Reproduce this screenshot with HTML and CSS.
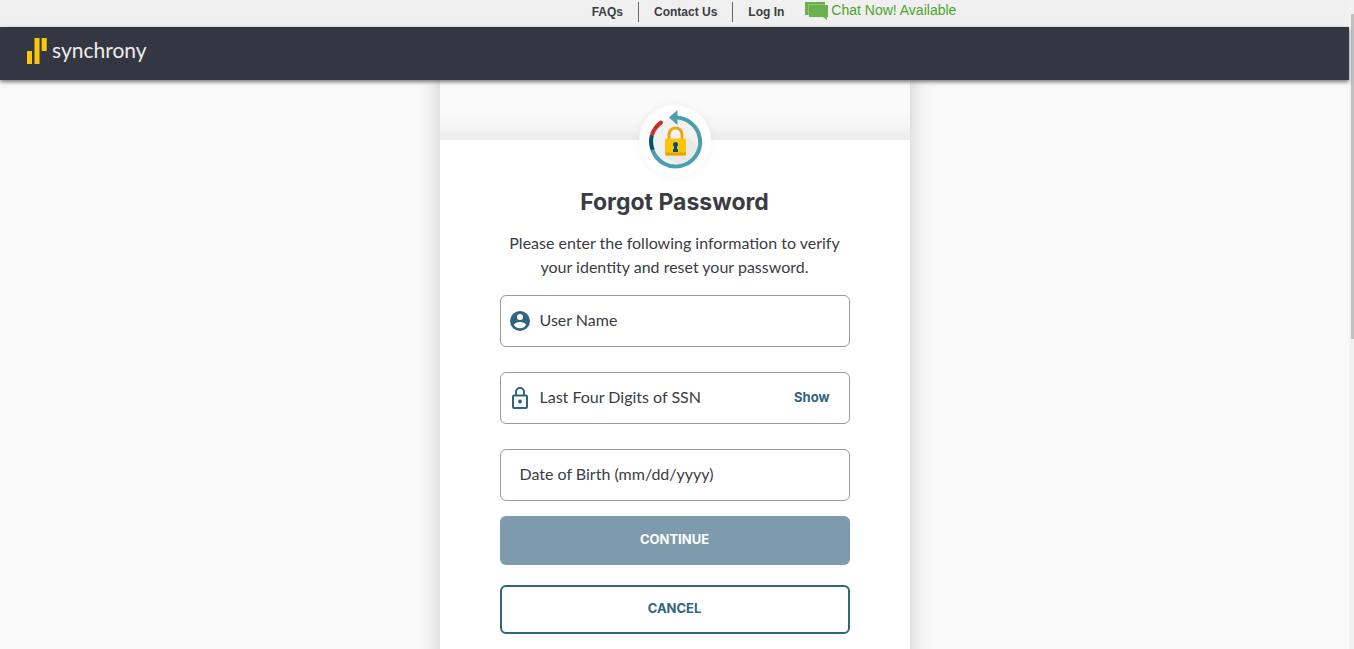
FILE: index.html
```html
<!DOCTYPE html>
<html lang="en">
<head>
<meta charset="utf-8">
<title>Forgot Password</title>
<link rel="stylesheet" href="styles.css">
</head>
<body>
<div class="shell">
  <div class="page">
    <nav class="topbar">
      <ul class="links">
        <li><a href="#faqs">FAQs</a></li>
        <li><a href="#contact">Contact Us</a></li>
        <li><a href="#login">Log In</a></li>
      </ul>
      <a class="chat" href="#chat">
        <svg width="24" height="20" viewBox="0 0 24 20" aria-hidden="true">
          <path fill="#8cc474" d="M0 1h20v13H0z"/>
          <path fill="#6ab04c" d="M0 1h20v2H3v11H0z"/>
          <path fill="#6ab04c" d="M4 4h19v12h-1v3l-4-3H4z"/>
        </svg>
        <span>Chat Now! Available</span>
      </a>
    </nav>
    <header class="brandbar">
      <a class="brand" href="#home">
        <svg width="20" height="26" viewBox="0 0 20 26" aria-hidden="true">
          <path fill="#fbc60d" d="M0 13h5v13H0zM7.500 0h5v26h-5zM14.700 0h5v13h-5z"/>
        </svg>
        <span>synchrony</span>
      </a>
    </header>
    <main class="card">
      <div class="banner"></div>
      <section class="panel">
        <div class="badge">
          <svg width="72" height="72" viewBox="0 0 72 72" aria-hidden="true">
            <circle cx="36.500" cy="37" r="24" fill="#f1f1ef"/>
            <path fill="#e9e9e7" d="M47 31l12 11a24 24 0 0 1-19 18L26 51h20z"/>
            <g fill="none" stroke-width="4">
              <path stroke="#4a9fae" d="M36.500 12.500A24.500 24.500 0 1 1 13.500 45"/>
              <path stroke="#00506e" d="M13.700 45A24.500 24.500 0 0 1 12.900 30"/>
              <path stroke="#c9302c" stroke-linecap="round" d="M13.300 29A24 24 0 0 1 22 17.500"/>
            </g>
            <path fill="#4a9fae" d="M30 12.500L38.500 5v15z"/>
            <path fill="none" stroke="#eda80d" stroke-width="3" d="M30 34v-4.500a6.500 6.500 0 0 1 13 0V34"/>
            <rect x="26" y="33.500" width="21" height="17" rx="1.500" fill="#fcc50b"/>
            <path fill="#e4a30b" d="M26 47.500h21V49a1.500 1.500 0 0 1-1.500 1.500h-18A1.500 1.500 0 0 1 26 49z"/>
            <path fill="#00506e" d="M36.500 37a2.600 2.600 0 0 1 1.500 4.700V44h1v3h-5v-3h1v-2.300a2.600 2.600 0 0 1 1.500-4.700z"/>
          </svg>
        </div>
        <h1>Forgot Password</h1>
        <p class="intro">Please enter the following information to verify your identity and reset your password.</p>
        <form>
          <div class="field">
            <svg width="20" height="20" viewBox="2 2 20 20" aria-hidden="true">
              <path fill="#31657f" d="M12 2a10 10 0 1 0 0 20 10 10 0 0 0 0-20zm0 3a3 3 0 1 1 0 6 3 3 0 0 1 0-6zm0 14.200a7.200 7.200 0 0 1-6-3.220c.03-1.990 4-3.080 6-3.080s5.970 1.090 6 3.080a7.200 7.200 0 0 1-6 3.220z"/>
            </svg>
            <input type="text" aria-label="User Name" placeholder="User Name">
          </div>
          <div class="field">
            <svg width="20" height="24" viewBox="0 0 20 24" aria-hidden="true">
              <rect x="3" y="9.500" width="14" height="12.500" rx="1" fill="none" stroke="#31657f" stroke-width="2"/>
              <path fill="none" stroke="#31657f" stroke-width="2" d="M6 9V6a4 4 0 0 1 8 0v3"/>
              <circle cx="10" cy="15.500" r="2" fill="#31657f"/>
            </svg>
            <input type="text" aria-label="Last Four Digits of SSN" placeholder="Last Four Digits of SSN">
            <button class="show" type="button">Show</button>
          </div>
          <div class="field plain">
            <input type="text" aria-label="Date of Birth (mm/dd/yyyy)" placeholder="Date of Birth (mm/dd/yyyy)">
          </div>
          <button class="action primary" type="submit">CONTINUE</button>
          <button class="action secondary" type="button">CANCEL</button>
        </form>
      </section>
    </main>
  </div>
  <div class="track"><div class="thumb"></div></div>
</div>
</body>
</html>
```
FILE: styles.css
```css
* { box-sizing: border-box; }
body {
  margin: 0;
  background: #f9f9f9;
  color: #3b3c43;
  font-family: Lato, "Open Sans", sans-serif;
  font-size: 16px;
}
a { color: inherit; text-decoration: none; }
svg { display: block; flex: none; }
.shell { display: grid; grid-template-columns: minmax(0, 1fr) 5px; min-height: 100vh; }
.page { display: flex; flex-direction: column; min-width: 0; }
.track { background: #f1f1f1; padding: 14px 0 0 2px; }
.thumb { height: 50vh; background: #c1c1c1; }

.topbar {
  display: flex;
  justify-content: center;
  height: 27px;
  padding-left: 184px;
  background: #f0f0f0;
  font-family: "Liberation Sans", Arial, sans-serif;
}
.links {
  display: flex;
  margin: 0;
  padding: 2px 0 0;
  list-style: none;
  font-size: 12px;
  font-weight: bold;
  line-height: 20px;
}
.links li { height: 20px; padding: 0 15px; }
.links li + li { border-left: 1px solid #666; }
.chat {
  display: flex;
  gap: 2px;
  padding: 1px 0 0 6px;
  color: #4ba52b;
  font-size: 14px;
  line-height: 19px;
}
.brandbar {
  position: relative;
  z-index: 1;
  display: flex;
  height: 53px;
  padding: 11px 27px;
  background: #343741;
  box-shadow: 0 2px 4px #777;
}
.brand { display: flex; gap: 5px; color: #eee; font-size: 21px; line-height: 24px; }

.card {
  position: relative;
  display: flex;
  flex: 1;
  flex-direction: column;
  width: 470px;
  max-width: 100%;
  margin: 0 auto;
  clip-path: inset(0 -30px);
}
/* Side shadow that keeps its full strength at both ends of the card */
.card::before {
  content: "";
  position: absolute;
  inset: -30px 0;
  z-index: -1;
  box-shadow: 0 0 20px rgba(0, 0, 0, .2);
}
.banner { height: 60px; background: linear-gradient(#fafafa 50%, #f6f6f6 75%, #ebebeb); }
.panel { flex: 1; padding: 0 60px 15px; background: #fff; text-align: center; }
.badge {
  width: 72px;
  height: 72px;
  margin: -35px auto 0;
  border-radius: 50%;
  background: #fff;
  box-shadow: 0 0 10px rgba(0, 0, 0, .05);
}
h1 {
  margin: 9px 0 0;
  font-family: Inter, sans-serif;
  font-size: 23px;
  font-weight: 700;
  line-height: 32px;
}
.intro { margin: 13px 0 16px; line-height: 24px; }
.field {
  display: flex;
  align-items: center;
  gap: 10px;
  height: 52px;
  margin-bottom: 25px;
  padding: 0 9px;
  border: 1px solid #999;
  border-radius: 6px;
}
.field.plain { margin-bottom: 15px; padding: 0 19px; }
.field input {
  flex: 1;
  min-width: 0;
  padding: 0 0 3px;
  border: 0;
  background: none;
  color: inherit;
  font: inherit;
}
.field input::placeholder { color: #3b3c43; opacity: 1; }
button { font-family: Inter, sans-serif; font-size: 13px; font-weight: 700; }
.show { padding: 0 10px 3px; border: 0; background: none; color: #31657f; }
.action {
  display: block;
  width: 100%;
  height: 49px;
  padding: 0 0 3px;
  border-radius: 6px;
}
.primary { margin-bottom: 20px; border: 0; background: #7d9bad; color: #fff; }
.secondary { border: 2px solid #31657f; background: #fff; color: #31657f; }
```
